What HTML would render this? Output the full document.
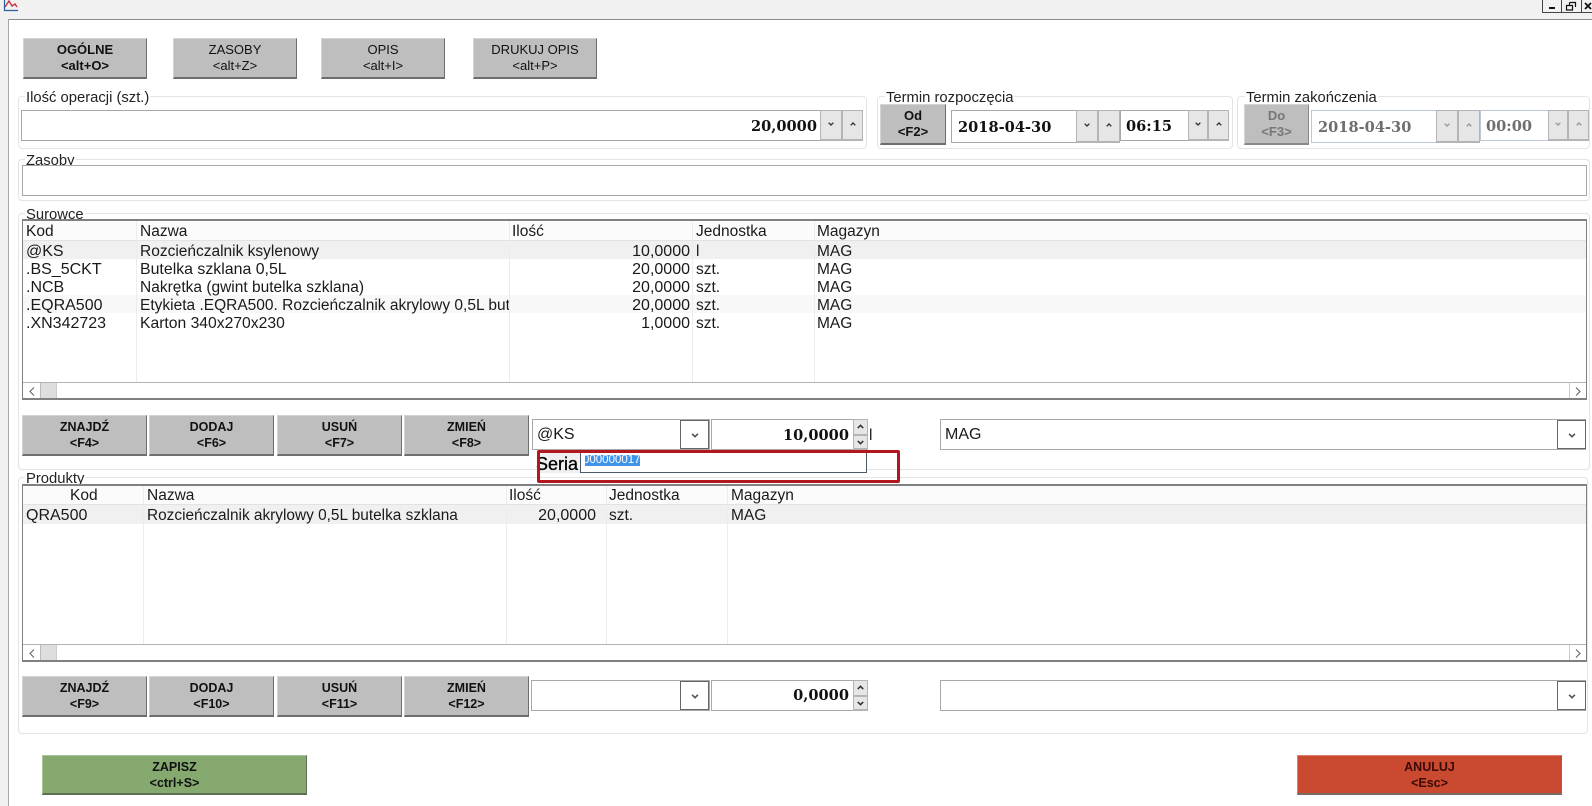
<!DOCTYPE html>
<html lang="pl">
<head>
<meta charset="utf-8">
<title>Operacja</title>
<style>
html,body{margin:0;padding:0;background:#fff}
#p{position:relative;width:1592px;height:806px;overflow:hidden;background:#fff;font-family:"Liberation Sans",Arial,sans-serif;color:#111}
#p div,#p svg{position:absolute;box-sizing:border-box}
.btn{background:#bebebe;border:1px solid;border-color:#d4d4d4 #6e6e6e #6e6e6e #d4d4d4;border-bottom-width:2px;text-align:center;font-size:13px;line-height:16px;padding-top:3px;white-space:nowrap}
.b{font-weight:bold;font-size:12.5px}
.grp{border:1px solid #e4e4e4;border-radius:4px}
.lab{font-size:14.8px;line-height:16px;background:#fff;padding:0 1px;white-space:nowrap;color:#222}
.inp{background:#fff;border:1px solid #a8a8a8}
.tbl{background:#fff;border:1px solid #808080;border-width:2px 1px 2px 1px}
.t{font-size:15.5px;line-height:18px;white-space:nowrap;color:#1a1a1a}
.c{font-size:16px}
.r{text-align:right;font-size:16px}
.num{font-family:"DejaVu Serif","Liberation Serif",serif;font-weight:bold;font-size:14.6px;line-height:20px;color:#111;white-space:nowrap}
.sp{background:#e6e6e6;border:1px solid #b4b4b4;border-bottom-width:2px}
.dd{background:#fff;border:1px solid #666}
.vl{width:1px;background:#ececec}
.hl{height:1px;background:#b4b4b4}
</style>
</head>
<body>
<div id="p">
<svg width="0" height="0" style="left:0;top:0">
<defs>
<symbol id="dn" viewBox="0 0 9 6"><path d="M1 1 L4.5 4.5 L8 1" fill="none" stroke="currentColor" stroke-width="2"/></symbol>
<symbol id="up" viewBox="0 0 9 6"><path d="M1 5 L4.5 1.5 L8 5" fill="none" stroke="currentColor" stroke-width="2"/></symbol>
<symbol id="lf" viewBox="0 0 6 9"><path d="M5 .5 L1 4.5 L5 8.5" fill="none" stroke="#666" stroke-width="1.1"/></symbol>
<symbol id="rt" viewBox="0 0 6 9"><path d="M1 .5 L5 4.5 L1 8.5" fill="none" stroke="#666" stroke-width="1.1"/></symbol>
</defs>
</svg>

<!-- window chrome -->
<div style="left:0;top:0;width:1592px;height:19px;background:#f1f1f1"></div>
<div style="left:0;top:19px;width:8px;height:787px;background:#f1f1f1"></div>
<div style="left:8px;top:19px;width:1584px;height:1px;background:#8c8c8c"></div>
<div style="left:8px;top:19px;width:1px;height:787px;background:#a8a8a8"></div>
<svg style="left:3px;top:0" width="15" height="13" viewBox="0 0 15 13"><path d="M1.5 0 V10.5 H15" fill="none" stroke="#2c5f9e" stroke-width="1.2"/><path d="M2 7 L6 1 L9 6 L12 4 L14 7" fill="none" stroke="#c8323c" stroke-width="1.4"/></svg>
<div style="left:1542px;top:0;width:50px;height:13px;background:#f1f1f1;border-left:1px solid #444;border-bottom:1px solid #444"></div>
<div style="left:1561px;top:0;width:1px;height:13px;background:#444"></div>
<div style="left:1581px;top:0;width:1px;height:13px;background:#444"></div>
<div style="left:1549px;top:7px;width:6px;height:2px;background:#111"></div>
<svg style="left:1565px;top:1px" width="12" height="10" viewBox="0 0 12 10"><path d="M4.5 1.5 H10.5 V6 M1.5 4.5 H7.5 V9 H1.5 Z M4.5 1.5 V4.5" fill="none" stroke="#111" stroke-width="1.2"/></svg>
<svg style="left:1584px;top:2px" width="8" height="8" viewBox="0 0 8 8"><path d="M1 1 L7 7 M7 1 L1 7" stroke="#111" stroke-width="1.8"/></svg>

<!-- tabs -->
<div class="btn" style="left:23px;top:38px;width:124px;height:41px"><b>OGÓLNE<br>&lt;alt+O&gt;</b></div>
<div class="btn" style="left:173px;top:38px;width:124px;height:41px">ZASOBY<br>&lt;alt+Z&gt;</div>
<div class="btn" style="left:321px;top:38px;width:124px;height:41px">OPIS<br>&lt;alt+I&gt;</div>
<div class="btn" style="left:473px;top:38px;width:124px;height:41px">DRUKUJ OPIS<br>&lt;alt+P&gt;</div>

<!-- Ilosc -->
<div class="grp" style="left:18px;top:96px;width:849px;height:53px"></div>
<div class="lab" style="left:25px;top:90px">Ilość operacji (szt.)</div>
<div class="inp" style="left:21px;top:110px;width:842px;height:31px"></div>
<div class="num" style="left:700px;top:117px;width:117px;text-align:right">20,0000</div>
<div class="sp" style="left:820px;top:110px;width:22px;height:31px;color:#333"><svg style="left:7px;top:11px" width="6" height="4"><use href="#dn"/></svg></div>
<div class="sp" style="left:842px;top:110px;width:21px;height:31px;color:#333"><svg style="left:7px;top:11px" width="6" height="4"><use href="#up"/></svg></div>

<!-- Termin rozp -->
<div class="grp" style="left:877px;top:96px;width:356px;height:53px"></div>
<div class="lab" style="left:885px;top:90px">Termin rozpoczęcia</div>
<div class="btn" style="left:880px;top:104px;width:66px;height:41px;line-height:16px;font-size:13px;padding-top:3px"><span style="font-size:13px;font-weight:bold">Od<br>&lt;F2&gt;</span></div>
<div class="inp" style="left:951px;top:110px;width:169px;height:33px"></div>
<div class="num" style="left:958px;top:118px">2018-04-30</div>
<div class="sp" style="left:1076px;top:110px;width:22px;height:33px;color:#333"><svg style="left:7px;top:12px" width="6" height="4"><use href="#dn"/></svg></div>
<div class="sp" style="left:1098px;top:110px;width:22px;height:33px;color:#333"><svg style="left:7px;top:12px" width="6" height="4"><use href="#up"/></svg></div>
<div class="inp" style="left:1120px;top:110px;width:109px;height:31px"></div>
<div class="num" style="left:1126px;top:117px">06:15</div>
<div class="sp" style="left:1188px;top:110px;width:20px;height:31px;color:#333"><svg style="left:6px;top:11px" width="6" height="4"><use href="#dn"/></svg></div>
<div class="sp" style="left:1208px;top:110px;width:21px;height:31px;color:#333"><svg style="left:7px;top:11px" width="6" height="4"><use href="#up"/></svg></div>

<!-- Termin zak -->
<div class="grp" style="left:1237px;top:96px;width:353px;height:53px"></div>
<div class="lab" style="left:1245px;top:90px">Termin zakończenia</div>
<div class="btn" style="left:1244px;top:104px;width:65px;height:41px;font-size:13px;color:#777;border-color:#d4d4d4 #8a8a8a #8a8a8a #d4d4d4"><span style="font-weight:bold">Do<br>&lt;F3&gt;</span></div>
<div class="inp" style="left:1311px;top:110px;width:168px;height:33px;border-color:#bcc8d4"></div>
<div class="num" style="left:1318px;top:118px;color:#6e6e6e">2018-04-30</div>
<div class="sp" style="left:1436px;top:110px;width:22px;height:33px;color:#999"><svg style="left:7px;top:12px" width="6" height="4"><use href="#dn"/></svg></div>
<div class="sp" style="left:1458px;top:110px;width:22px;height:33px;color:#999"><svg style="left:7px;top:12px" width="6" height="4"><use href="#up"/></svg></div>
<div class="inp" style="left:1480px;top:110px;width:109px;height:31px;border-color:#bcc8d4"></div>
<div class="num" style="left:1486px;top:117px;color:#6e6e6e">00:00</div>
<div class="sp" style="left:1548px;top:110px;width:20px;height:31px;color:#999"><svg style="left:6px;top:11px" width="6" height="4"><use href="#dn"/></svg></div>
<div class="sp" style="left:1568px;top:110px;width:21px;height:31px;color:#999"><svg style="left:7px;top:11px" width="6" height="4"><use href="#up"/></svg></div>

<!-- Zasoby -->
<div class="grp" style="left:18px;top:159px;width:1572px;height:42px"></div>
<div class="lab" style="left:25px;top:153px">Zasoby</div>
<div class="inp" style="left:22px;top:165px;width:1565px;height:31px"></div>

<!-- Surowce -->
<div class="grp" style="left:18px;top:213px;width:1572px;height:257px"></div>
<div class="lab" style="left:25px;top:207px">Surowce</div>
<div class="tbl" style="left:22px;top:219px;width:1565px;height:181px"></div>
<div style="left:23px;top:221px;width:1563px;height:20px;background:#fbfbfb;border-bottom:1px solid #e2e2e2"></div>
<div style="left:23px;top:241px;width:1563px;height:18px;background:#f0f0f0"></div>
<div style="left:23px;top:295px;width:1563px;height:18px;background:#f8f8f8"></div>
<div class="vl" style="left:136px;top:221px;height:161px"></div>
<div class="vl" style="left:509px;top:221px;height:161px"></div>
<div class="vl" style="left:692px;top:221px;height:161px"></div>
<div class="vl" style="left:814px;top:221px;height:161px"></div>
<div class="t" style="left:26px;top:223px">Kod</div>
<div class="t" style="left:140px;top:223px">Nazwa</div>
<div class="t" style="left:512px;top:223px">Ilość</div>
<div class="t" style="left:696px;top:223px">Jednostka</div>
<div class="t" style="left:817px;top:223px">Magazyn</div>

<div class="t c" style="left:26px;top:243px">@KS</div>
<div class="t" style="left:140px;top:243px">Rozcieńczalnik ksylenowy</div>
<div class="t r" style="left:560px;top:243px;width:130px">10,0000</div>
<div class="t" style="left:696px;top:243px">l</div>
<div class="t" style="left:817px;top:243px">MAG</div>

<div class="t c" style="left:26px;top:261px">.BS_5CKT</div>
<div class="t" style="left:140px;top:261px;font-size:15.9px">Butelka szklana 0,5L</div>
<div class="t r" style="left:560px;top:261px;width:130px">20,0000</div>
<div class="t" style="left:696px;top:261px">szt.</div>
<div class="t" style="left:817px;top:261px">MAG</div>

<div class="t c" style="left:26px;top:279px">.NCB</div>
<div class="t" style="left:140px;top:279px">Nakrętka (gwint butelka szklana)</div>
<div class="t r" style="left:560px;top:279px;width:130px">20,0000</div>
<div class="t" style="left:696px;top:279px">szt.</div>
<div class="t" style="left:817px;top:279px">MAG</div>

<div class="t c" style="left:26px;top:297px">.EQRA500</div>
<div class="t" style="left:140px;top:297px;width:369px;overflow:hidden">Etykieta .EQRA500. Rozcieńczalnik akrylowy 0,5L butelka</div>
<div class="t r" style="left:560px;top:297px;width:130px">20,0000</div>
<div class="t" style="left:696px;top:297px">szt.</div>
<div class="t" style="left:817px;top:297px">MAG</div>

<div class="t c" style="left:26px;top:315px">.XN342723</div>
<div class="t" style="left:140px;top:315px;font-size:15.7px">Karton 340x270x230</div>
<div class="t r" style="left:560px;top:315px;width:130px">1,0000</div>
<div class="t" style="left:696px;top:315px">szt.</div>
<div class="t" style="left:817px;top:315px">MAG</div>

<div class="hl" style="left:23px;top:382px;width:1563px"></div>
<svg style="left:29px;top:387px" width="6" height="9"><use href="#lf"/></svg>
<div style="left:40px;top:383px;width:17px;height:15px;background:#dedede;border-left:1px solid #bbb;border-right:1px solid #ccc"></div>
<div class="vl" style="left:1569px;top:383px;height:15px;background:#ccc"></div>
<svg style="left:1575px;top:387px" width="6" height="9"><use href="#rt"/></svg>

<div class="btn" style="left:22px;top:415px;width:125px;height:41px"><span class="b">ZNAJDŹ<br>&lt;F4&gt;</span></div>
<div class="btn" style="left:149px;top:415px;width:125px;height:41px"><span class="b">DODAJ<br>&lt;F6&gt;</span></div>
<div class="btn" style="left:277px;top:415px;width:125px;height:41px"><span class="b">USUŃ<br>&lt;F7&gt;</span></div>
<div class="btn" style="left:404px;top:415px;width:125px;height:41px"><span class="b">ZMIEŃ<br>&lt;F8&gt;</span></div>

<div class="inp" style="left:532px;top:419px;width:178px;height:31px"></div>
<div class="t c" style="left:537px;top:426px">@KS</div>
<div class="dd" style="left:680px;top:420px;width:29px;height:29px;color:#555"><svg style="left:10px;top:12px" width="8" height="5"><use href="#dn"/></svg></div>
<div class="inp" style="left:711px;top:419px;width:143px;height:31px"></div>
<div class="num" style="left:720px;top:426px;width:129px;text-align:right">10,0000</div>
<div class="sp" style="left:853px;top:419px;width:15px;height:16px;color:#333;border-bottom-width:1px"><svg style="left:3px;top:4px" width="7" height="5"><use href="#up"/></svg></div>
<div class="sp" style="left:853px;top:435px;width:15px;height:15px;color:#333"><svg style="left:3px;top:4px" width="7" height="5"><use href="#dn"/></svg></div>
<div class="t" style="left:869px;top:427px">l</div>
<div class="inp" style="left:940px;top:419px;width:646px;height:31px"></div>
<div class="t c" style="left:945px;top:426px">MAG</div>
<div class="dd" style="left:1557px;top:420px;width:29px;height:29px;color:#555"><svg style="left:10px;top:12px" width="8" height="5"><use href="#dn"/></svg></div>

<!-- Produkty -->
<div class="grp" style="left:18px;top:477px;width:1570px;height:257px"></div>
<div class="lab" style="left:25px;top:471px">Produkty</div>
<div class="tbl" style="left:22px;top:484px;width:1565px;height:178px"></div>
<div style="left:23px;top:486px;width:1563px;height:19px;background:#fbfbfb;border-bottom:1px solid #e2e2e2"></div>
<div style="left:23px;top:505px;width:1563px;height:19px;background:#f0f0f0"></div>
<div class="vl" style="left:143px;top:486px;height:158px"></div>
<div class="vl" style="left:506px;top:486px;height:158px"></div>
<div class="vl" style="left:606px;top:486px;height:158px"></div>
<div class="vl" style="left:727px;top:486px;height:158px"></div>
<div class="t" style="left:70px;top:487px">Kod</div>
<div class="t" style="left:147px;top:487px">Nazwa</div>
<div class="t" style="left:509px;top:487px">Ilość</div>
<div class="t" style="left:609px;top:487px">Jednostka</div>
<div class="t" style="left:731px;top:487px">Magazyn</div>
<div class="t c" style="left:26px;top:507px">QRA500</div>
<div class="t" style="left:147px;top:507px;font-size:15.4px">Rozcieńczalnik akrylowy 0,5L butelka szklana</div>
<div class="t r" style="left:466px;top:507px;width:130px">20,0000</div>
<div class="t" style="left:609px;top:507px">szt.</div>
<div class="t" style="left:731px;top:507px">MAG</div>

<div class="hl" style="left:23px;top:644px;width:1563px"></div>
<svg style="left:29px;top:649px" width="6" height="9"><use href="#lf"/></svg>
<div style="left:40px;top:645px;width:17px;height:15px;background:#dedede;border-left:1px solid #bbb;border-right:1px solid #ccc"></div>
<div class="vl" style="left:1569px;top:645px;height:15px;background:#ccc"></div>
<svg style="left:1575px;top:649px" width="6" height="9"><use href="#rt"/></svg>

<div class="btn" style="left:22px;top:676px;width:125px;height:41px"><span class="b">ZNAJDŹ<br>&lt;F9&gt;</span></div>
<div class="btn" style="left:149px;top:676px;width:125px;height:41px"><span class="b">DODAJ<br>&lt;F10&gt;</span></div>
<div class="btn" style="left:277px;top:676px;width:125px;height:41px"><span class="b">USUŃ<br>&lt;F11&gt;</span></div>
<div class="btn" style="left:404px;top:676px;width:125px;height:41px"><span class="b">ZMIEŃ<br>&lt;F12&gt;</span></div>

<div class="inp" style="left:531px;top:680px;width:179px;height:31px"></div>
<div class="dd" style="left:680px;top:681px;width:29px;height:29px;color:#555"><svg style="left:10px;top:12px" width="8" height="5"><use href="#dn"/></svg></div>
<div class="inp" style="left:711px;top:680px;width:143px;height:31px"></div>
<div class="num" style="left:720px;top:686px;width:129px;text-align:right">0,0000</div>
<div class="sp" style="left:853px;top:680px;width:15px;height:16px;color:#333;border-bottom-width:1px"><svg style="left:3px;top:4px" width="7" height="5"><use href="#up"/></svg></div>
<div class="sp" style="left:853px;top:696px;width:15px;height:15px;color:#333"><svg style="left:3px;top:4px" width="7" height="5"><use href="#dn"/></svg></div>
<div class="inp" style="left:940px;top:680px;width:646px;height:31px"></div>
<div class="dd" style="left:1557px;top:681px;width:29px;height:29px;color:#555"><svg style="left:10px;top:12px" width="8" height="5"><use href="#dn"/></svg></div>

<!-- Seria popup -->
<div style="left:537px;top:452px;width:43px;height:21px;background:#f0f0f0"></div>
<div style="left:536px;top:451px;font-size:18px;line-height:26px;color:#000;width:44px;overflow:hidden;white-space:nowrap;-webkit-text-stroke:.3px #000">Seria</div>
<div style="left:580px;top:450px;width:287px;height:23px;background:#fff;border:1px solid #4a5a68;border-top:0"></div>
<div style="left:585px;top:455px;width:55px;height:11px;background:#3f94ea"></div>
<div style="left:585px;top:453px;width:55px;height:14px;overflow:hidden;font-size:11.5px;line-height:15px;color:#fff;white-space:nowrap;text-indent:-2px">000000017</div>
<div style="left:537px;top:450px;width:363px;height:33px;border:3px solid #b2161e;border-radius:2px"></div>

<!-- bottom -->
<div class="btn" style="left:42px;top:755px;width:265px;height:40px;background:#85a96e;border-color:#a8c498 #5e6e55 #5e6e55 #a8c498"><span class="b">ZAPISZ<br>&lt;ctrl+S&gt;</span></div>
<div class="btn" style="left:1297px;top:755px;width:265px;height:40px;background:#c94a30;color:#3a0a06;border-color:#e0806c #7a6a66 #7a6a66 #e0806c"><span class="b">ANULUJ<br>&lt;Esc&gt;</span></div>
</div>
</body>
</html>
